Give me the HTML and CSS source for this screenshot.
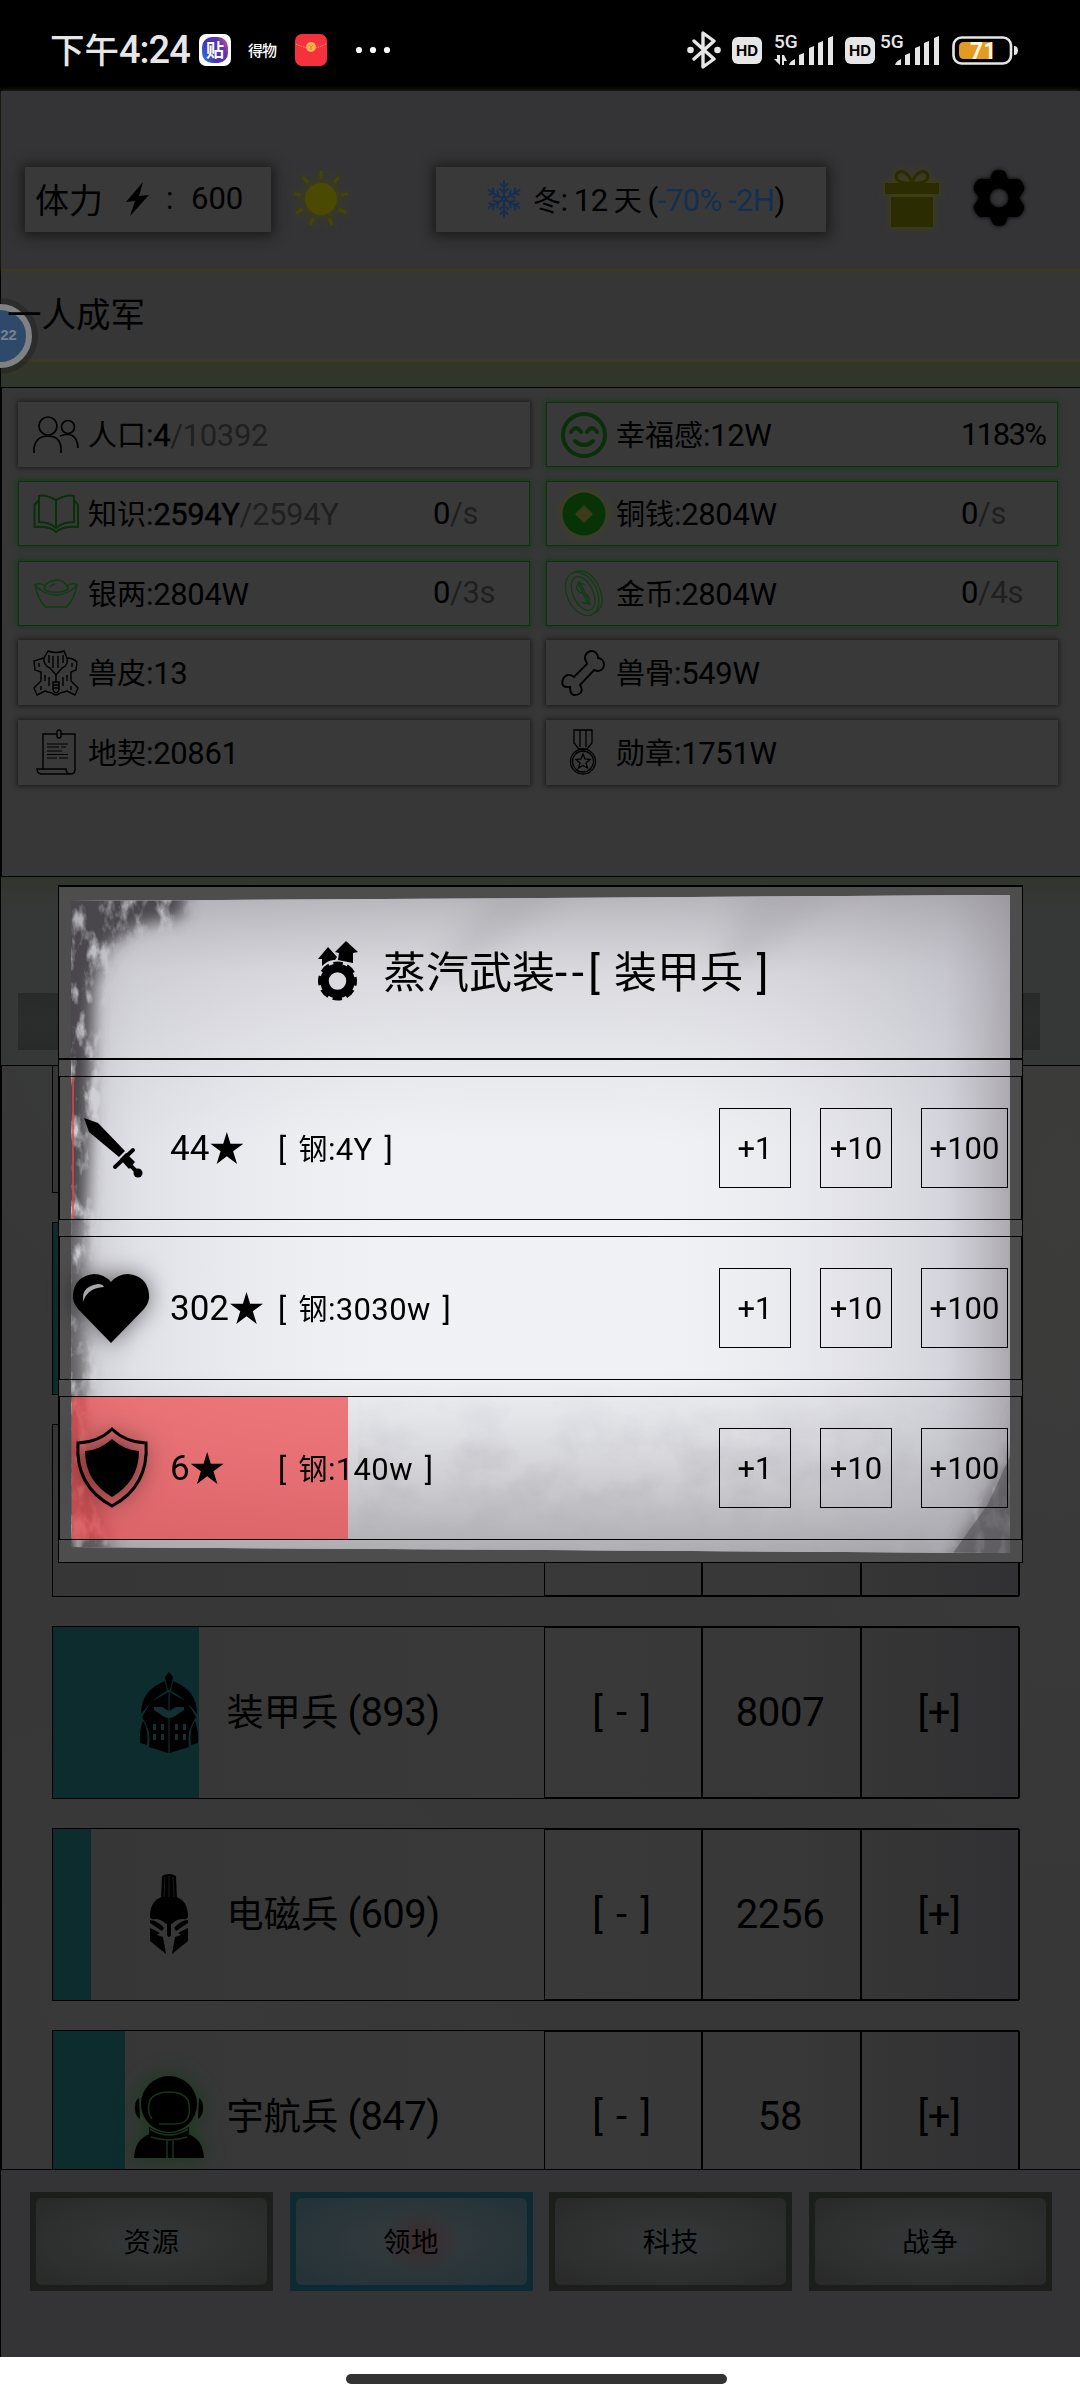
FILE: index.html
```html
<!DOCTYPE html>
<html lang="zh-CN">
<head>
<meta charset="utf-8">
<title>一人成军</title>
<link rel="stylesheet" href="styles.css">
</head>
<body>
<div class="status">
  <div class="clock"><span class="zh">下午</span>4:24</div>
  <div class="app-tieba"><span>贴</span></div>
  <div class="app-dewu">得物</div>
  <svg class="app-red" width="32" height="32" viewBox="0 0 32 32"><rect width="32" height="32" rx="7" fill="#f5313e"/><path d="M1 10Q16 18 31 10" fill="none" stroke="#ff9a6a" stroke-width="1" stroke-dasharray="1.5 1"/><circle cx="16" cy="13" r="5" fill="#f9b24c"/><path d="M14 11l2 2 2-2M16 13v3" stroke="#e67a20" fill="none"/></svg>
  <svg class="dots" width="36" height="8" viewBox="0 0 36 8"><circle cx="4" cy="4" r="3.1"/><circle cx="18" cy="4" r="3.1"/><circle cx="32" cy="4" r="3.1"/></svg>
  <div class="signals">
    <svg width="34" height="38" viewBox="0 0 34 38"><path d="M7 10L27 28 16 36V2L27 10 7 28" fill="none" stroke="#e6e6e6" stroke-width="3.4" stroke-linejoin="round" stroke-linecap="round"/><circle cx="3.5" cy="19" r="3.3" fill="#e6e6e6"/><circle cx="30.5" cy="19" r="3.3" fill="#e6e6e6"/></svg>
    <span class="hd">HD</span>
    <svg class="sig" width="62" height="42" viewBox="0 -4 62 42"><text x="2" y="15">5G</text><path d="M2 26h3v-4h3v10zM12 32v-4h3l-3-6h-2v10z"/><path d="M17 32q1-4 6-6v6zM27 32V22l5-2v12zM37 32V15l5-2v19zM46 32V10l5-2v24zM56 32V5l5-2v29z"/></svg>
    <span class="hd">HD</span>
    <svg class="sig two" width="62" height="42" viewBox="0 -4 62 42"><text x="2" y="15">5G</text><path d="M17 32q1-4 6-6v6zM27 32V22l5-2v12zM37 32V15l5-2v19zM46 32V10l5-2v24zM56 32V5l5-2v29z"/></svg>
    <svg class="battery" width="67" height="29" viewBox="0 0 67 29"><rect x="1.5" y="1.5" width="57.500" height="26" rx="8" fill="none" stroke="#e6e6e6" stroke-width="2.600"/><path d="M12 6h28v17H12q-5 0-5-5v-7q0-5 5-5z" fill="#e29a22"/><path d="M62 10q4 0 4 4.500t-4 4.500z" fill="#e6e6e6"/><text x="18" y="23">71</text></svg>
  </div>
</div>

<div class="app">
  <div class="top">
    <div class="box energy"><span class="zh">体力</span>
      <svg width="24" height="34" viewBox="0 0 24 34"><path d="M18 0L1 20l9-1L5 34 24 13l-10 1z"/></svg>
      <span class="colon">:</span><span class="num">600</span></div>
    <svg class="sun" width="60" height="60" viewBox="-30 -30 60 60"><circle r="16"/><path d="M0-20V-28M13-16L18-22M-13-16L-18-22M20-4L27-5.500M-20-4L-27-5.500M18 10L25 14M-18 10L-25 14M8 19L11 26M-8 19L-11 26" stroke-width="3.200"/></svg>
    <div class="box season">
      <svg width="36" height="40" viewBox="-18 -20 36 40"><defs><path id="arm" d="M0-3V-18M-3.500-15L0-11.500L3.500-15M-4-10L0-6.500L4-10"/></defs><g fill="none" stroke="#142f50" stroke-width="2" stroke-linecap="round"><circle r="2"/><use href="#arm"/><use href="#arm" transform="rotate(60)"/><use href="#arm" transform="rotate(120)"/><use href="#arm" transform="rotate(180)"/><use href="#arm" transform="rotate(240)"/><use href="#arm" transform="rotate(300)"/></g></svg>
      <p><span class="zh">冬</span>: 12 <span class="zh">天</span> (<span class="blue">-70% -2H</span>)</p>
    </div>
    <svg class="gift" width="54" height="57" viewBox="0 0 54 57"><path d="M0 13H54V24H0zM6 27H48V57H6z"/><path d="M27 13Q12 14 11 7Q12 0 19 2Q25 6 27 13Q29 6 35 2Q42 0 43 7Q42 14 27 13" fill="none" stroke="#2c2c02" stroke-width="3"/></svg>
    <svg class="gear" width="52" height="56" viewBox="-26 -28 52 56"><path fill-rule="evenodd" d="M-7-24Q-6-28 0-28T7-24L9-19L16-19Q20-20 23-16Q27-9 24-6L20 0L24 6Q27 10 23 15Q20 20 16 19L9 19L7 24Q6 28 0 28T-7 24L-9 19L-16 19Q-20 20-23 15Q-27 10-24 6L-20 0L-24-6Q-27-10-23-16Q-20-20-16-19L-9-19zM0-9.500A9.500 9.500 0 1 0 0 9.500A9.500 9.500 0 1 0 0-9.500z"/></svg>
  </div>
  <div class="bubble"><span>22</span></div>
  <div class="title"><span>一人成军</span></div>
  <div class="glowband"></div>

  <div class="resources">
    <div class="res"><svg width="46" height="46" viewBox="0 0 46 46"><g fill="none" stroke="#000" stroke-width="1.700"><circle cx="15" cy="14" r="9"/><path d="M1 41V36Q3 24 15 24T28 36V41"/><circle cx="35" cy="15" r="6.500"/><path d="M27 24Q44 18 45 36"/></g></svg><p><span class="zh">人口</span>:<span class="md">4</span><em>/10392</em></p></div>
    <div class="res green"><svg width="46" height="46" viewBox="0 0 46 46"><g fill="none" stroke="#093009" stroke-width="4"><circle cx="23" cy="23" r="21"/><path d="M10 20q5-8 10 0M26 20q5-8 10 0M14 29q9 8 18 0" stroke-linecap="round"/></g></svg><p><span class="zh">幸福感</span>:12W</p><span class="rate pct">1183%</span></div>
    <div class="res green"><svg width="46" height="46" viewBox="0 0 46 46"><g fill="none" stroke="#093009" stroke-width="2"><path d="M23 9Q12 3 6 5V31Q16 31 23 37Q30 31 41 31V5Q34 3 23 9V37M6 9L1.500 14V36Q17 35 23 41Q30 35 45 36V14L41 9"/></g></svg><p><span class="zh">知识</span>:<span class="md">2594Y</span><em>/2594Y</em></p><span class="rate">0<em>/s</em></span></div>
    <div class="res green"><svg class="coin" width="46" height="46" viewBox="0 0 46 46"><circle cx="23" cy="23" r="21.500" fill="#073307"/><path d="M23 14l9 9-9 9-9-9z" fill="#3b3b1b"/></svg><p><span class="zh">铜钱</span>:2804W</p><span class="rate">0<em>/s</em></span></div>
    <div class="res green"><svg width="46" height="46" viewBox="0 0 46 46"><g fill="none" stroke="#123c12" stroke-width="1.600"><path d="M2 15Q5 31 13 37H33Q41 31 44 15Q39 12 34 16Q29 8 19 11Q14 12 12 16Q7 12 2 15ZM2 15Q11 25 23 25T44 15M12 16Q10 20 14 21Q25 24 34 20Q36 18 34 16M17 17Q19 14 22 14"/></g></svg><p><span class="zh">银两</span>:2804W</p><span class="rate">0<em>/3s</em></span></div>
    <div class="res green"><svg width="46" height="46" viewBox="0 0 46 46"><g fill="none" stroke="#123c12" stroke-width="1.300" transform="rotate(-25 23 23)"><ellipse cx="21" cy="23" rx="15" ry="23"/><ellipse cx="22" cy="23" rx="10" ry="18"/><path d="M25 0Q39 3 39 23T25 46M27 16Q24 10 19 14Q17 20 22 23T25 31Q21 36 17 30M22 10V36M24 10V36"/></g></svg><p><span class="zh">金币</span>:2804W</p><span class="rate">0<em>/4s</em></span></div>
    <div class="res"><svg width="46" height="46" viewBox="0 0 46 46"><g fill="none" stroke="#000" stroke-width="1.400"><path d="M15 1Q23 4 31 1L34 8Q40 8 44 12L43 20L38 22V31L45 38L42 45L34 41L27 43Q23 47 19 43L12 41L4 45L1 38L8 31V22L2 20L1 11L11 8Z"/><path d="M11 8Q10 15 17 18L23 25L29 18Q36 15 34 8M16 5V13M20 6V18M25 6V18M30 5V13M12 25V31M16 27V36M30 27V36M34 25V31M6 13V17M39 13V17M8 36V40M38 36V40M23 24V32M20 32H26V40Q23 46 20 40ZM20 35H26M20 38H26"/></g></svg><p><span class="zh">兽皮</span>:13</p></div>
    <div class="res"><svg width="46" height="46" viewBox="0 0 46 46"><path d="M25 11A6.500 6.500 0 1 1 37 8A6.500 6.500 0 1 1 36 21L33 20L19 35Q23 41 18 44Q9 48 9 37Q-1 38 2 29Q6 22 13 27L26 14Z" fill="none" stroke="#000" stroke-width="1.900"/></svg><p><span class="zh">兽骨</span>:549W</p></div>
    <div class="res"><svg width="46" height="46" viewBox="0 0 46 46"><g fill="none" stroke="#000" stroke-width="1.400"><path d="M24 5H10V40M28 5H42V41Q42 45 37 45H8Q4 44 4 40H33Q33 45 38 45"/><rect x="24" y="1" width="4" height="8" rx="2"/><path d="M14 15H35M14 18H26M28 18H33M14 22H29M14 25.500H35M14 29H24M26 29H35" stroke-width="1.200"/></g></svg><p><span class="zh">地契</span>:20861</p></div>
    <div class="res"><svg width="46" height="46" viewBox="0 0 46 46"><g fill="none" stroke="#000" stroke-width="1.300"><path d="M13 1H31V14L26 20H18L13 14ZM19 1V18M25 1V18"/><circle cx="22" cy="32.500" r="12.500"/><circle cx="22" cy="32.500" r="10.500"/><path d="M22 25L24 30L29 30.500L25 34L26.500 39L22 36.500L17.500 39L19 34L15 30.500L20 30Z"/></g></svg><p><span class="zh">勋章</span>:1751W</p></div>
  </div>

  <div class="tabs"><div class="tabbar"></div></div>

  <div class="list">
    <div class="unit"><div class="main"></div><div class="cell"></div><div class="cell"></div><div class="cell"></div></div>
    <div class="unit"><div class="main"><div class="fill" style="width:60px"></div></div><div class="cell"></div><div class="cell"></div><div class="cell"></div></div>
    <div class="unit"><div class="main"></div><div class="cell"></div><div class="cell"></div><div class="cell"></div></div>
    <div class="unit">
      <div class="main"><div class="fill" style="width:146px"></div>
        <svg class="helm" width="72" height="84" viewBox="0 0 72 84"><path d="M36 1l4 5-3 13h-2L32 6zM32 10L34 20Q22 25 8 43Q8 19 32 10zM40 10L38 20Q50 25 64 43Q64 19 40 10zM35.400 21V82L16 76Q19 60 9 46L18 31zM36.600 21V82L56 76Q53 60 63 46L54 31zM10 50Q16 58 14 74L7 72Q6 60 10 50zM62 50Q56 58 58 74L65 72Q66 60 62 50z"/><path d="M21 36h8l7 4 7-4h8v3l-6 4q-5 4-9 4t-9-4l-6-4zM20 53h3v6h-3zM28 53h3v6h-3zM42 53h3v6h-3zM50 53h3v6h-3zM20 63h3v6h-3zM28 63h3v6h-3zM42 63h3v6h-3zM50 63h3v6h-3z" fill="#123032"/></svg>
        <p><span class="zh">装甲兵</span> (893)</p></div>
      <div class="cell"><span class="minus">[ - ]</span></div><div class="cell">8007</div><div class="cell">[+]</div></div>
    <div class="unit">
      <div class="main"><div class="fill" style="width:38px"></div>
        <svg class="helm" width="72" height="84" viewBox="0 0 72 84"><path d="M28 26L29 3Q36-1 43 3L44 26zM17 44Q17 23 36 23T55 44Q54 47 50 46Q44 46 40 50L38 51V62Q36 66 34 62V51L32 50Q28 46 22 46Q18 47 17 44zM17 47Q24 47 31 55L29 58 17 50zM55 47Q48 47 41 55L43 58 55 50zM17 55L27 60 24 62 30 64 33 81 17 68zM55 55L45 60 48 62 42 64 39 81 55 68z"/><path d="M32 4L31 24M36 3V24M40 4L41 24" stroke="#222" stroke-width=".8"/></svg>
        <p><span class="zh">电磁兵</span> (609)</p></div>
      <div class="cell"><span class="minus">[ - ]</span></div><div class="cell">2256</div><div class="cell">[+]</div></div>
    <div class="unit">
      <div class="main"><div class="fill" style="width:72px"></div>
        <svg class="helm astro" width="72" height="84" viewBox="0 0 72 84"><ellipse cx="36" cy="29" rx="28" ry="28"/><path d="M6 23q-4 2-4 10t5 11zM66 23q4 2 4 10t-5 11zM16 52Q36 64 56 52V60Q36 70 16 60ZM1 83Q2 64 17 59Q35 70 55 59Q70 64 71 83Z"/><path d="M19 44Q13 36 17 25Q22 17 36 17T55 25Q61 49 42 49H26M17 54Q36 66 55 54M18 62Q36 68 54 62M34 65V83M40 65V83" fill="none" stroke="#19331b" stroke-width="1.500"/></svg>
        <p><span class="zh">宇航兵</span> (847)</p></div>
      <div class="cell"><span class="minus">[ - ]</span></div><div class="cell">58</div><div class="cell">[+]</div></div>
  </div>

  <div class="nav">
    <div class="btn"><span>资源</span></div>
    <div class="btn active"><span>领地</span></div>
    <div class="btn"><span>科技</span></div>
    <div class="btn"><span>战争</span></div>
  </div>

  <div class="modal">
    <svg class="paper" width="963" height="675" viewBox="1 1 963 675">
      <defs>
        <linearGradient id="v" x1="0" y1="0" x2="0" y2="1"><stop offset="0" stop-color="#8f8c92" stop-opacity=".6"/><stop offset=".12" stop-color="#a5a3ab" stop-opacity=".3"/><stop offset=".38" stop-color="#b5b5bd" stop-opacity="0"/><stop offset=".72" stop-color="#b5b5bd" stop-opacity="0"/><stop offset="1" stop-color="#8f8d91" stop-opacity=".7"/></linearGradient>
        <linearGradient id="h" x1="0" y1="0" x2="1" y2="0"><stop offset="0" stop-color="#9a999f" stop-opacity=".45"/><stop offset=".07" stop-color="#c9c9d2" stop-opacity=".4"/><stop offset=".45" stop-color="#fff" stop-opacity="0"/><stop offset=".55" stop-color="#fff" stop-opacity="0"/><stop offset=".93" stop-color="#b9b8c4" stop-opacity=".5"/><stop offset="1" stop-color="#868088" stop-opacity=".65"/></linearGradient>
        <filter id="smoke" x="-20%" y="-20%" width="140%" height="140%"><feGaussianBlur in="SourceGraphic" stdDeviation="8" result="b"/><feTurbulence type="fractalNoise" baseFrequency=".09 .05" numOctaves="4" seed="8"/><feDisplacementMap in="b" in2="" scale="0"/><feTurbulence type="fractalNoise" baseFrequency=".07 .035" numOctaves="4" seed="8"/><feColorMatrix values="0 0 0 0 0 0 0 0 0 0 0 0 0 0 0 0 3.500 0 0 -1"/><feComposite in="b" operator="in"/><feMerge><feMergeNode/></feMerge></filter>
        <filter id="fray" x="-20%" y="-20%" width="140%" height="140%"><feGaussianBlur in="SourceGraphic" stdDeviation="8" result="b"/><feTurbulence type="fractalNoise" baseFrequency=".07 .035" numOctaves="4" seed="8"/><feColorMatrix values="0 0 0 0 0 0 0 0 0 0 0 0 0 0 0 0 3.500 0 0 -.8" result="n"/><feComposite in="b" in2="n" operator="in"/></filter>
        <filter id="soften"><feGaussianBlur stdDeviation="12"/></filter>
        <filter id="mist" x="0" y="0" width="100%" height="100%"><feTurbulence type="fractalNoise" baseFrequency=".02 .025" numOctaves="5" seed="5"/><feColorMatrix values="0 0 0 0 .45  0 0 0 0 .45  0 0 0 0 .48  0 1.900 0 0 -.78"/></filter>
        <linearGradient id="mg" x1="0" y1="0" x2="0" y2="1"><stop offset="0" stop-color="#000"/><stop offset="1" stop-color="#fff"/></linearGradient>
        <mask id="low"><rect x="300" y="500" width="652" height="167" fill="url(#mg)"/></mask>
        <clipPath id="sheet"><path d="M13 15L952 9V667L13 661Z"/></clipPath>
      </defs>
      <rect width="965" height="677" fill="#4e4d4d"/>
      <g clip-path="url(#sheet)">
        <rect x="13" y="8" width="940" height="660" fill="#f0f1f5"/>
        <rect x="13" y="8" width="940" height="660" fill="url(#h)"/>
        <rect x="13" y="8" width="940" height="660" fill="url(#v)"/>
        <g mask="url(#low)"><rect x="300" y="500" width="652" height="167" filter="url(#mist)"/></g>
        <g filter="url(#fray)" fill="#4a474b"><path d="M-10-5H130L125 30 80 40 50 60 36 100 32 240 28 330H-10z"/><path d="M-10 320H28L24 420 28 480 26 560 46 640 60 690H-10z" opacity=".8"/></g>
        <path d="M962 520L952 570 915 635 880 690H985z" fill="#5a565a" opacity=".7" filter="url(#fray)"/>
        <path d="M440 0L520 0 420 70 370 90zM690 0L790 0 700 70 660 85z" fill="#8c8b90" opacity=".2" filter="url(#soften)"/>
        <path d="M952 570L930 618 895 667H952z" fill="#59555a" opacity=".6"/>
      </g>
    </svg>
    <div class="mhead">
      <svg width="40" height="60" viewBox="0 0 40 60"><path d="M28 0L40 11 35 12V22L20 19 21 12 17 11ZM10 6L19 16 17 19Q11 18 4 25L4 18 0 18Z"/><g transform="translate(19.500 40)"><circle r="13" fill="none" stroke="#000" stroke-width="8.500"/><circle r="17.500" fill="none" stroke="#000" stroke-width="4" stroke-dasharray="9.200 4.550" stroke-dashoffset="4.600"/></g></svg>
      <h1><span class="zh">蒸汽武装</span><span class="dash">--</span>[ <span class="zh">装甲兵</span> ]</h1>
    </div>
    <div class="mrow"><div class="prog" style="width:2px"></div>
      <svg class="mi" width="80" height="84" viewBox="0 0 80 84"><path d="M12 12L26 17 53 45 47 51 17 26z"/><path d="M43 61L61 44M52 53L66 67" stroke="#000" stroke-width="4" stroke-linecap="round" fill="none"/><path d="M48 53l6-6 9 9-6 7z"/><circle cx="66" cy="67" r="4.500"/></svg>
      <p class="lv">44<i class="star"></i></p><p class="cost">[ <span class="zh">钢</span>:4Y ]</p>
      <div class="adds"><button>+1</button><button>+10</button><button class="wide">+100</button></div></div>
    <div class="mrow"><div class="prog" style="width:0"></div>
      <svg class="mi soft" width="80" height="84" viewBox="0 0 80 84"><path d="M39 77L6 43Q0 36 1 28Q3 10 22 8Q32 8 39 16Q46 8 56 8Q75 10 77 28Q78 36 72 43Z"/><path d="M11 32Q11 20 26 18Q31 18 32 21Q15 22 11 36Z" fill="#a9a9ad"/></svg>
      <p class="lv">302<i class="star"></i></p><p class="cost">[ <span class="zh">钢</span>:3030w ]</p>
      <div class="adds"><button>+1</button><button>+10</button><button class="wide">+100</button></div></div>
    <div class="mrow"><div class="prog" style="width:276px"></div>
      <svg class="mi soft" width="80" height="84" viewBox="0 0 80 84"><path d="M40 3Q53 16 74 17Q77 60 40 80Q3 60 6 17Q27 16 40 3Z" fill="none" stroke="#000" stroke-width="3"/><path d="M40 13Q52 24 67 25Q67 55 40 71Q13 55 13 25Q28 24 40 13Z"/></svg>
      <p class="lv">6<i class="star"></i></p><p class="cost">[ <span class="zh">钢</span>:140w ]</p>
      <div class="adds"><button>+1</button><button>+10</button><button class="wide">+100</button></div></div>
  </div>
</div>
<div class="homebar"><div class="pill"></div></div>
</body>
</html>
```
FILE: styles.css
```css
* { box-sizing: border-box; margin: 0; padding: 0; }
body { width: 1080px; height: 2400px; display: flex; flex-direction: column; overflow: hidden; background: #fff; font-family: Roboto, "Noto Sans CJK SC", sans-serif; color: #000; }
svg { display: block; flex: none; }
em { font-style: normal; color: #202020; }
p, h1 { white-space: nowrap; font-weight: 400; }

.status { height: 91px; flex: none; background: #000; color: #e6e6e6; display: flex; align-items: center; padding: 9px 0 0 50px; }
.clock { width: 149px; font-size: 38px; font-weight: 500; letter-spacing: -1px; white-space: nowrap; line-height: 50px; }
.clock .zh { font-size: 34.5px; letter-spacing: 0; }
.app-tieba { width: 32px; height: 32px; border-radius: 7px; background: #fff; display: grid; place-items: center; }
.app-tieba span { width: 26px; height: 26px; border-radius: 10px; background: linear-gradient(60deg, #2a8fe8, #4534b5 35%, #5a35b0 70%, #ee5590); color: #fff; font: 700 18px/25px "Noto Sans CJK SC", sans-serif; text-align: center; }
.app-dewu { margin-left: 17px; width: 30px; font: 500 15px/20px "Noto Sans CJK SC", sans-serif; letter-spacing: -1px; color: #fff; white-space: nowrap; }
.app-red { margin-left: 17px; }
.dots { margin-left: 28px; fill: #fff; }
.signals { display: flex; align-items: center; margin-left: 296px; }
.hd { width: 30px; height: 27px; border-radius: 6px; background: #e6e6e6; color: #000; font: 700 15px/27px Inter, sans-serif; text-align: center; margin-left: 11px; }
.sig { margin-left: 10px; fill: #e6e6e6; }
.sig.two { margin-left: 3px; }
.sig text { font: 500 19px Roboto, sans-serif; }
.battery { margin-left: 12px; }
.battery text { font: 700 23px Roboto, sans-serif; fill: #fff4dc; }

.app { position: relative; height: 2266px; flex: none; border-left: 1px solid #000; border-bottom: 1px solid #000; display: flex; flex-direction: column;
  background: radial-gradient(500px 400px at 400px 900px, #3c3e3d, transparent), radial-gradient(300px 700px at 1060px 1100px, #3c3c3b, transparent), radial-gradient(400px 300px at 150px 1900px, #39393a, transparent), #373738; }
.top { height: 180px; flex: none; display: flex; align-items: flex-start; padding: 76px 0 0 24px; background: #343436; border-bottom: 2px solid #3d3d14; box-shadow: 0 0 5px #3a3a1c; }
.box { height: 65px; background: #39393a; box-shadow: 0 1px 12px 3px #1a1a1a; display: flex; align-items: center; padding-bottom: 2px; }
.energy { width: 246px; padding-left: 10px; font-size: 31px; }
.energy .zh { font-size: 34px; width: 90px; }
.energy .colon { margin-left: 17px; width: 25px; }
.sun { margin-left: 20px; margin-top: 2px; fill: #4a4a02; filter: drop-shadow(0 0 4px #444404); }
.sun path { stroke: #444404; }
.season { margin-left: 85px; width: 390px; padding-left: 50px; font-size: 31px; }
.season p { margin-left: 11px; letter-spacing: -.5px; word-spacing: -1px; }
.season .zh { font-size: 28px; }
.blue { color: #142f50; }
.gift { margin: 3px 0 0 59px; fill: #2c2c02; filter: drop-shadow(0 0 4px #444405); }
.gear { margin: 3px 0 0 34px; filter: drop-shadow(0 0 2px #000); }
.title { height: 88px; flex: none; padding-left: 6px; font: 34.5px/83px "Noto Sans CJK SC", sans-serif; background: #363637; }
.title span { position: relative; z-index: 2; }
.glowband { height: 28px; flex: none; border-top: 3px solid #3b3b24; background: linear-gradient(#333529, #30362c); }

.resources { height: 490px; flex: none; border: 1px solid #000; border-right: 0; display: grid; grid-template-columns: 512px 512px; grid-auto-rows: 65px; gap: 14.4px 16px; padding: 14px 0 0 16px; align-content: start; background: #373738; }
.res { display: flex; align-items: center; padding-left: 15px; background: #39393a; box-shadow: 0 0 5px 1px #1a1a1a; font-size: 31px; letter-spacing: -.35px; }
.res p { margin: -3px 0 0 9px; width: 345px; }
.rate { margin-top: -1px; }
.pct { letter-spacing: -1.6px; }
.res .zh { font-size: 29px; letter-spacing: 0; }
.md { letter-spacing: -.4px; -webkit-text-stroke: .4px #000; }
.res.green { border: 1px solid #0b330b; box-shadow: 0 0 6px 1px #163a16; padding-left: 14px; }
.coin { filter: drop-shadow(0 0 6px #45450f); }
.tabs { height: 188px; flex: none; padding: 116px 0 0 17px; background: linear-gradient(#31362c, #363737 30px); }
.tabbar { width: 1022px; height: 57px; background: radial-gradient(#303332, #282929); }
.list { height: 1104px; flex: none; overflow: hidden; border: 1px solid #000; border-width: 1px 0 0 1px; padding-left: 50px; }
.unit { margin-left: -.5px; width: 967px; height: 173px; margin-bottom: 29px; display: grid; grid-template-columns: 491px 158px 159px 159px; border: 1px solid #000; background: linear-gradient(90deg, #363637, #39393a 45%, #383838 75%, #313133); }
.unit:first-child { margin-top: -46px; }
.main { position: relative; display: flex; align-items: center; font-size: 40px; letter-spacing: -.6px; }
.main .zh { font-size: 37.200px; letter-spacing: 0; }
.fill { position: absolute; left: 0; top: 0; bottom: 0; background: #0c2c2e; }
.helm { position: relative; margin-left: 80px; }
.astro { filter: drop-shadow(0 0 10px #143a16); }
.main p { margin: -5px 0 0 22px; position: relative; }
.cell { border: 1px solid #000; display: grid; place-items: center; font-size: 40px; letter-spacing: -.3px; padding-right: 2px; }
.minus { word-spacing: 4px; }
.nav { height: 188px; flex: none; border-top: 1px solid #000; background: #343436; display: flex; gap: 16.600px; padding: 22px 0 0 29px; }
.btn { width: 243px; height: 99px; border: 6px solid #1c1e1b; background: #1c1e1b; display: grid; }
.btn span { border-radius: 6px; background: radial-gradient(closest-side, #343838, #313333 50%, #2a2a2a 130%); font: 27.500px/84px "Noto Sans CJK SC", sans-serif; text-align: center; letter-spacing: .5px; }
.btn.active { border-color: #0d2a32; background: #0d2a32; }
.btn.active span { background: radial-gradient(40px 32px at 54% 50%, rgba(70,25,28,.5), transparent), radial-gradient(closest-side, #353b3e, #2c363a 70%, #243338 130%); }

.bubble { position: absolute; z-index: 1; left: -33px; top: 213px; width: 64px; height: 64px; border-radius: 50%; border: 6px solid #7e8283; background: #2f496a; box-shadow: 0 0 0 6px rgba(25,25,25,.35); }
.bubble span { display: block; padding: 19px 0 0 26px; font: 700 15px/15px "Liberation Mono", monospace; color: #74838f; letter-spacing: -1px; }

.modal { position: absolute; z-index: 3; left: 57px; top: 794px; width: 965px; height: 678px; border: 1px solid #000; border-top-width: 2px; }
.paper { position: absolute; inset: 0; }
.mhead { position: relative; height: 173px; border-bottom: 2px solid #000; display: flex; align-items: center; padding: 0 0 4px 259px; }
.mhead h1 { margin: -4px 0 0 25px; font-size: 44px; word-spacing: 3px; }
.mhead .zh { font-size: 43px; }
.dash { letter-spacing: 4.500px; }
.mrow { position: relative; margin-top: 16px; height: 144px; border: 1px solid #000; display: flex; align-items: center; }
.mrow p { position: relative; }
.prog { position: absolute; left: 12px; top: 0; bottom: 0; background: rgba(238,70,72,.7); }
.mi { position: relative; margin-left: 12px; }
.soft { filter: drop-shadow(0 0 12px rgba(0,0,0,.55)); }
.lv { margin-left: 18px; width: 108px; font-size: 35px; display: flex; align-items: center; }
.star { width: 33px; height: 32px; margin-left: 1px; background: #000; clip-path: polygon(50% 0, 61% 37%, 100% 37%, 69% 60%, 81% 100%, 50% 76%, 19% 100%, 31% 60%, 0 37%, 39% 37%); }
.cost { font-size: 31px; width: 441px; word-spacing: 4px; letter-spacing: .35px; margin-top: -3px; }
.cost .zh { font-size: 29px; }
.adds { position: relative; display: flex; gap: 29px; }
.adds button { width: 72px; height: 80px; border: 1px solid #000; background: transparent; font: 31px Roboto, sans-serif; color: #000; }
.adds .wide { width: 87px; }

.homebar { height: 43px; padding: 17px 0 0 346px; background: #fff; }
.pill { width: 381px; height: 10px; border-radius: 5px; background: #333; }
```
